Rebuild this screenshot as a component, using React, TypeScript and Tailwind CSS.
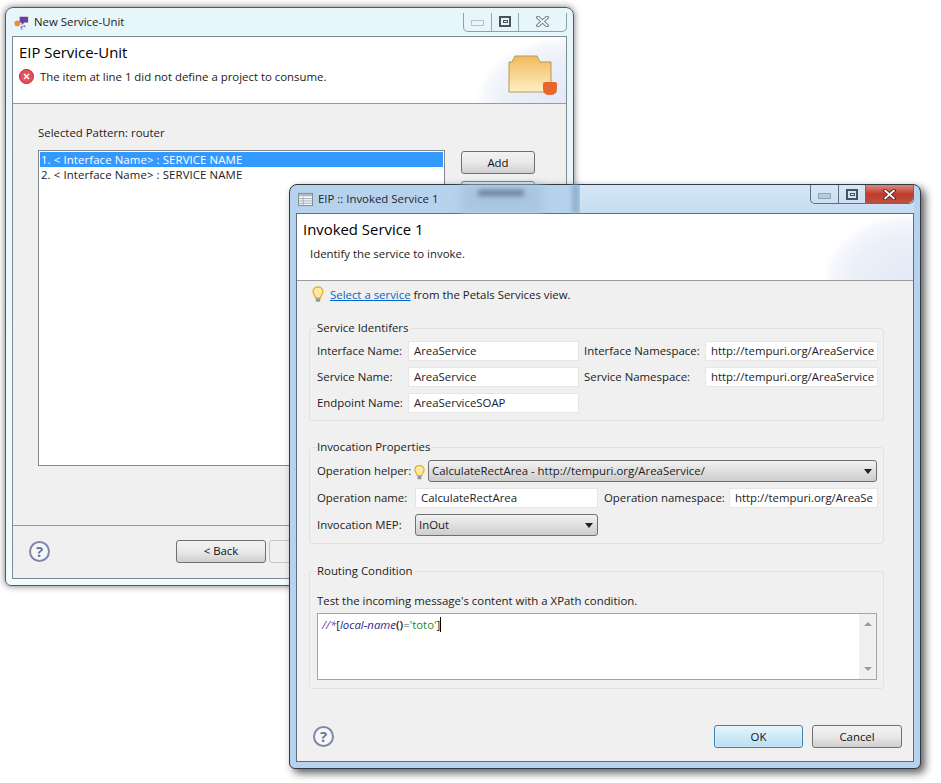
import type { ReactNode } from 'react';

const btn = 'flex items-center justify-center rounded-[3px] border border-[#707070] bg-linear-to-b from-[#f3f3f3] via-[#e9e9e9] to-[#cfcfcf] text-[#111]';

function WinButtons({ active }: { active?: boolean }) {
  return (
    <div className={`flex h-[19px] self-start rounded-b-[5px] border border-t-0 ${active ? 'border-[#5b6f85]' : 'border-[#8f9fa6]'}`}>
      <div className={`flex w-[28px] items-center justify-center border-r ${active ? 'border-[#5b6f85]' : 'border-[#9aa8ae]'}`}>
        <div className={`mt-[3px] h-[6px] w-[13px] border ${active ? 'border-[#8ea4b8] bg-[#b7cbdc]' : 'border-[#b5c2c8] bg-[#eef5f7]'}`} />
      </div>
      <div className={`flex w-[27px] items-center justify-center border-r ${active ? 'border-[#5b6f85]' : 'border-[#9aa8ae]'}`}>
        <div className="flex h-[11px] w-[12px] items-center justify-center border-2 border-[#46525c]">
          <div className="h-[3px] w-[5px] border border-[#46525c]" />
        </div>
      </div>
      <div className={`flex w-[47px] items-center justify-center rounded-br-[5px] ${active ? 'bg-linear-to-b from-[#d98a7c] via-[#c0392b] to-[#b8503f]' : ''}`}>
        <svg width="13" height="11" viewBox="0 0 13 11">
          <path d="M2 1.5 L11 9.5 M11 1.5 L2 9.5" stroke={active ? '#4c1a14' : '#59676d'} strokeWidth="3.6" strokeLinecap="round" />
          <path d="M2 1.5 L11 9.5 M11 1.5 L2 9.5" stroke={active ? '#fff' : '#f1f6f8'} strokeWidth="1.8" strokeLinecap="round" />
        </svg>
      </div>
    </div>
  );
}

function Swoosh() {
  return (
    <div className="absolute inset-y-0 right-0 w-[90px] bg-[radial-gradient(ellipse_90px_66px_at_100%_100%,#e3e9f6_0%,#ebeff8_65%,#f5f7fc_90%,transparent_100%)]" />
  );
}

function Bulb({ className }: { className?: string }) {
  return (
    <svg className={className} width="12" height="17" viewBox="0 0 12 17">
      <path d="M6 1 C2.8 1 1 3.2 1 5.6 C1 8 3.2 9.2 3.6 12 H8.4 C8.8 9.2 11 8 11 5.6 C11 3.2 9.2 1 6 1 Z" fill="#fde9a3" stroke="#e2ae2a" strokeWidth="1.3" />
      <rect x="3.8" y="12.4" width="4.4" height="3.4" rx="1" fill="#8b97a3" />
    </svg>
  );
}

function Help() {
  return (
    <div className="flex h-[21px] w-[21px] items-center justify-center rounded-full border-2 border-[#7d88a8] bg-[#f6f7fa] text-[15px] leading-none font-bold text-[#6a7696]">?</div>
  );
}

function Arrow({ className }: { className?: string }) {
  return <div className={`h-0 w-0 border-x-[4px] border-t-[5px] border-x-transparent border-t-[#222] ${className ?? ''}`} />;
}

function Input({ value, className }: { value: string; className?: string }) {
  return (
    <div className={`flex h-[20px] items-center overflow-hidden border border-[#e6e6e6] bg-white pl-[5px] whitespace-nowrap ${className ?? ''}`}>{value}</div>
  );
}

function Select({ value, className }: { value: string; className?: string }) {
  return (
    <div className={`flex h-[22px] items-center justify-between rounded-[3px] border border-[#707070] bg-linear-to-b from-[#f2f2f2] to-[#cdcdcd] pr-[4px] pl-[3px] ${className ?? ''}`}>
      <span>{value}</span>
      <Arrow />
    </div>
  );
}

function Group({ title, className, children }: { title: string; className?: string; children: ReactNode }) {
  return (
    <div className={`relative ml-[12px] w-[575px] rounded-[3px] border border-[#e2e2e2] pl-[7px] ${className ?? ''}`}>
      <span className="absolute -top-[10px] left-[7px] bg-[#f0f0f0] pr-[2px] text-[#222]">{title}</span>
      {children}
    </div>
  );
}

function BackWindow() {
  return (
    <div className="absolute top-[7px] left-[5px] flex h-[579px] w-[569px] flex-col rounded-t-[8px] rounded-b-[6px] border border-[#4f5b60] bg-linear-to-b from-[#e6f6fa] to-[#f2fbfd] px-[6px] pb-[6px] shadow-[0_0_7px_rgba(0,0,0,0.55)]">
      <div className="flex h-[28px] items-center">
        <svg className="ml-[2px]" width="16" height="16" viewBox="0 0 17 17">
          <circle cx="3.5" cy="10" r="3" fill="#ee8a3c" />
          <path d="M6 3 H15 V9 H11 L8 12 V9 H6 Z" fill="#6b3f9e" />
          <rect x="7" y="13" width="2" height="2" fill="#8a6ab5" />
          <rect x="10" y="12" width="2" height="2" fill="#8a6ab5" />
          <rect x="7" y="15" width="2" height="2" fill="#b79fd0" />
        </svg>
        <span className="ml-[4px] text-[#222]">New Service-Unit</span>
        <div className="ml-auto"><WinButtons /></div>
      </div>
      <div className="flex min-h-0 flex-1 flex-col border border-[#7f8a90] bg-[#f0f0f0]">
        <div className="relative h-[67px] shrink-0 border-b border-[#9a9a9a] bg-white pt-[6px] pl-[6px]">
          <Swoosh />
          <div className="relative text-[14.9px] leading-[18px] font-medium text-black">EIP Service-Unit</div>
          <div className="relative mt-[7px] flex items-center gap-[6px]">
            <div className="flex h-[15px] w-[15px] items-center justify-center rounded-full border border-[#b52a36] bg-[#e4505c]">
              <svg width="7" height="7" viewBox="0 0 7 7"><path d="M1 1 L6 6 M6 1 L1 6" stroke="#fff" strokeWidth="1.6" /></svg>
            </div>
            <span className="text-[#222]">The item at line 1 did not define a project to consume.</span>
          </div>
          <svg className="absolute top-[18px] right-[8px]" width="50" height="42" viewBox="0 0 50 42">
            <defs>
              <linearGradient id="folder" x1="0" y1="0" x2="0" y2="1">
                <stop offset="0" stopColor="#f2b95c" />
                <stop offset="1" stopColor="#fdf0c4" />
              </linearGradient>
            </defs>
            <path d="M1 7 H4 L7 1 H29 L32 7 H43 V37 H1 Z" fill="url(#folder)" stroke="#b49a5e" />
            <path d="M35 29 Q35 27 37 27 H47 Q49 27 49 29 V34 Q49 40 42 40 Q35 40 35 34 Z" fill="#e8662a" />
          </svg>
        </div>
        <div className="flex min-h-0 flex-1 flex-col border-b border-[#9a9a9a] pt-[20px] pl-[25px]">
          <div className="h-[18px] leading-[18px] text-[#222]">Selected Pattern: router</div>
          <div className="mt-[8px] flex gap-[16px]">
            <div className="h-[316px] w-[407px] border border-[#828790] bg-white p-[1px]">
              <div className="flex h-[15px] items-center bg-[#3399ff] pl-[1px] tracking-[0.1px] text-white">1. &lt; Interface Name&gt; : SERVICE NAME</div>
              <div className="flex h-[15px] items-center pl-[1px] tracking-[0.1px] text-[#222]">2. &lt; Interface Name&gt; : SERVICE NAME</div>
            </div>
            <div className="flex flex-col gap-[7px] pt-[1px]">
              <div className={`${btn} h-[23px] w-[74px]`}>Add</div>
              <div className={`${btn} h-[23px] w-[74px]`}>Remove</div>
            </div>
          </div>
        </div>
        <div className="flex h-[52px] shrink-0 items-center pb-[2px] pl-[16px]">
          <Help />
          <div className={`${btn} ml-[126px] h-[23px] w-[90px]`}>&lt; Back</div>
          <div className="ml-[3px] h-[23px] w-[90px] rounded-[3px] border border-[#c4c4c4]" />
        </div>
      </div>
    </div>
  );
}

function FrontWindow() {
  return (
    <div className="absolute top-[184px] left-[289px] flex h-[585px] w-[632px] flex-col rounded-t-[8px] rounded-b-[6px] border border-[#2e3b46] bg-[#b7d2ec] px-[6px] pb-[6px] shadow-[4px_4px_8px_rgba(0,0,0,0.65)]">
      <div className="relative flex h-[28px] shrink-0 items-center">
        <div className="absolute inset-y-0 left-[165px] w-[82px] bg-[#a9c5e0] blur-[4px]" />
        <div className="absolute top-[5px] left-[182px] h-[6px] w-[46px] bg-[#6d8098] blur-[2.5px]" />
        <div className="absolute inset-y-0 left-[276px] w-[7px] bg-[#8fb0cf] blur-[2px]" />
        <div className="absolute inset-y-0 right-0 left-[284px] bg-linear-to-b from-[#d6e7f6] to-[#c5dcf1]" />
        <svg className="relative ml-[2px]" width="15" height="15" viewBox="0 0 16 16">
          <rect x="0.5" y="1.5" width="15" height="13" fill="#f4f5f6" stroke="#7b8794" />
          <rect x="1" y="2" width="14" height="2.5" fill="#aeb8c3" />
          <path d="M1 7 H15 M1 9.5 H15 M1 12 H15 M5.5 5 V14" stroke="#a3adb8" />
        </svg>
        <span className="relative ml-[5px] text-[#1c2530]">EIP :: Invoked Service 1</span>
        <div className="relative ml-auto self-start"><WinButtons active /></div>
      </div>
      <div className="flex min-h-0 flex-1 flex-col border border-[#5d6e7e] bg-[#f0f0f0]">
        <div className="relative h-[67px] shrink-0 border-b border-[#9a9a9a] bg-white pt-[6px] pl-[6px]">
          <Swoosh />
          <div className="relative text-[14.9px] leading-[18px] font-medium text-black">Invoked Service 1</div>
          <div className="relative mt-[7px] pl-[7px] text-[#222]">Identify the service to invoke.</div>
        </div>
        <div className="flex h-[47px] items-start pt-[5px] pl-[15px] text-[#222]">
          <Bulb />
          <span className="ml-[6px]">
            <span className="text-[#0066cc] underline">Select a service</span> from the Petals Services view.
          </span>
        </div>

        <Group title="Service Identifers" className="h-[93px] pt-[12px]">
          <div className="grid grid-cols-[91px_171px_126px_173px] items-center gap-y-[6px] whitespace-nowrap text-[#222]">
            <span>Interface Name:</span>
            <Input value="AreaService" />
            <span className="pl-[5px]">Interface Namespace:</span>
            <Input value="http://tempuri.org/AreaService" />
            <span>Service Name:</span>
            <Input value="AreaService" />
            <span className="pl-[5px]">Service Namespace:</span>
            <Input value="http://tempuri.org/AreaService" />
            <span>Endpoint Name:</span>
            <Input value="AreaServiceSOAP" />
          </div>
        </Group>

        <Group title="Invocation Properties" className="mt-[26px] h-[97px] pt-[12px] whitespace-nowrap text-[#222]">
          <div className="flex h-[22px] items-center">
            <span className="w-[97px]">Operation helper:</span>
            <Bulb className="mt-[3px] w-[11px]" />
            <Select value="CalculateRectArea - http://tempuri.org/AreaService/" className="ml-[3px] w-[449px]" />
          </div>
          <div className="mt-[6px] flex h-[20px] items-center">
            <span className="w-[98px]">Operation name:</span>
            <Input value="CalculateRectArea" className="w-[183px]" />
            <span className="w-[131px] pl-[6px]">Operation namespace:</span>
            <Input value="http://tempuri.org/AreaSe" className="w-[149px]" />
          </div>
          <div className="mt-[6px] flex h-[22px] items-center">
            <span className="w-[98px]">Invocation MEP:</span>
            <Select value="InOut" className="w-[183px]" />
          </div>
        </Group>

        <Group title="Routing Condition" className="mt-[27px] h-[118px] pt-[19px] text-[#222]">
          <div className="h-[19px] leading-[19px]">Test the incoming message's content with a XPath condition.</div>
          <div className="mt-[3px] flex h-[67px] w-[560px] border border-[#a5a5a5] bg-white">
            <div className="flex-1 pt-[2px] pl-[4px]">
              <span className="text-[#7a3fb5] italic">//*</span>
              <span>[</span>
              <span className="text-[#2a2a8c] italic">local-name</span>
              <span className="font-semibold">()</span>
              <span className="text-[#555]">=</span>
              <span className="text-[#1f8a1f]">'toto'</span>
              <span className="border-r border-black">]</span>
            </div>
            <div className="flex w-[17px] flex-col items-center justify-between bg-[#f0f0f0] py-[8px]">
              <div className="h-0 w-0 border-x-[4px] border-b-[4px] border-x-transparent border-b-[#9a9a9a]" />
              <div className="h-0 w-0 border-x-[4px] border-t-[4px] border-x-transparent border-t-[#9a9a9a]" />
            </div>
          </div>
        </Group>

        <div className="mt-[36px] flex items-center pr-[11px] pl-[16px]">
          <Help />
          <div className="ml-auto flex gap-[9px]">
            <div className="flex h-[23px] w-[89px] items-center justify-center rounded-[3px] border border-[#3c7fb1] bg-linear-to-b from-[#e6f5fc] to-[#b9def3] text-[#111] shadow-[inset_0_0_2px_#fff]">OK</div>
            <div className={`${btn} h-[23px] w-[90px]`}>Cancel</div>
          </div>
        </div>
      </div>
    </div>
  );
}

export default function App() {
  return (
    <div className="relative h-[783px] w-[941px] overflow-hidden bg-white font-['Open_Sans',sans-serif] text-[11.4px]">
      <BackWindow />
      <FrontWindow />
    </div>
  );
}
